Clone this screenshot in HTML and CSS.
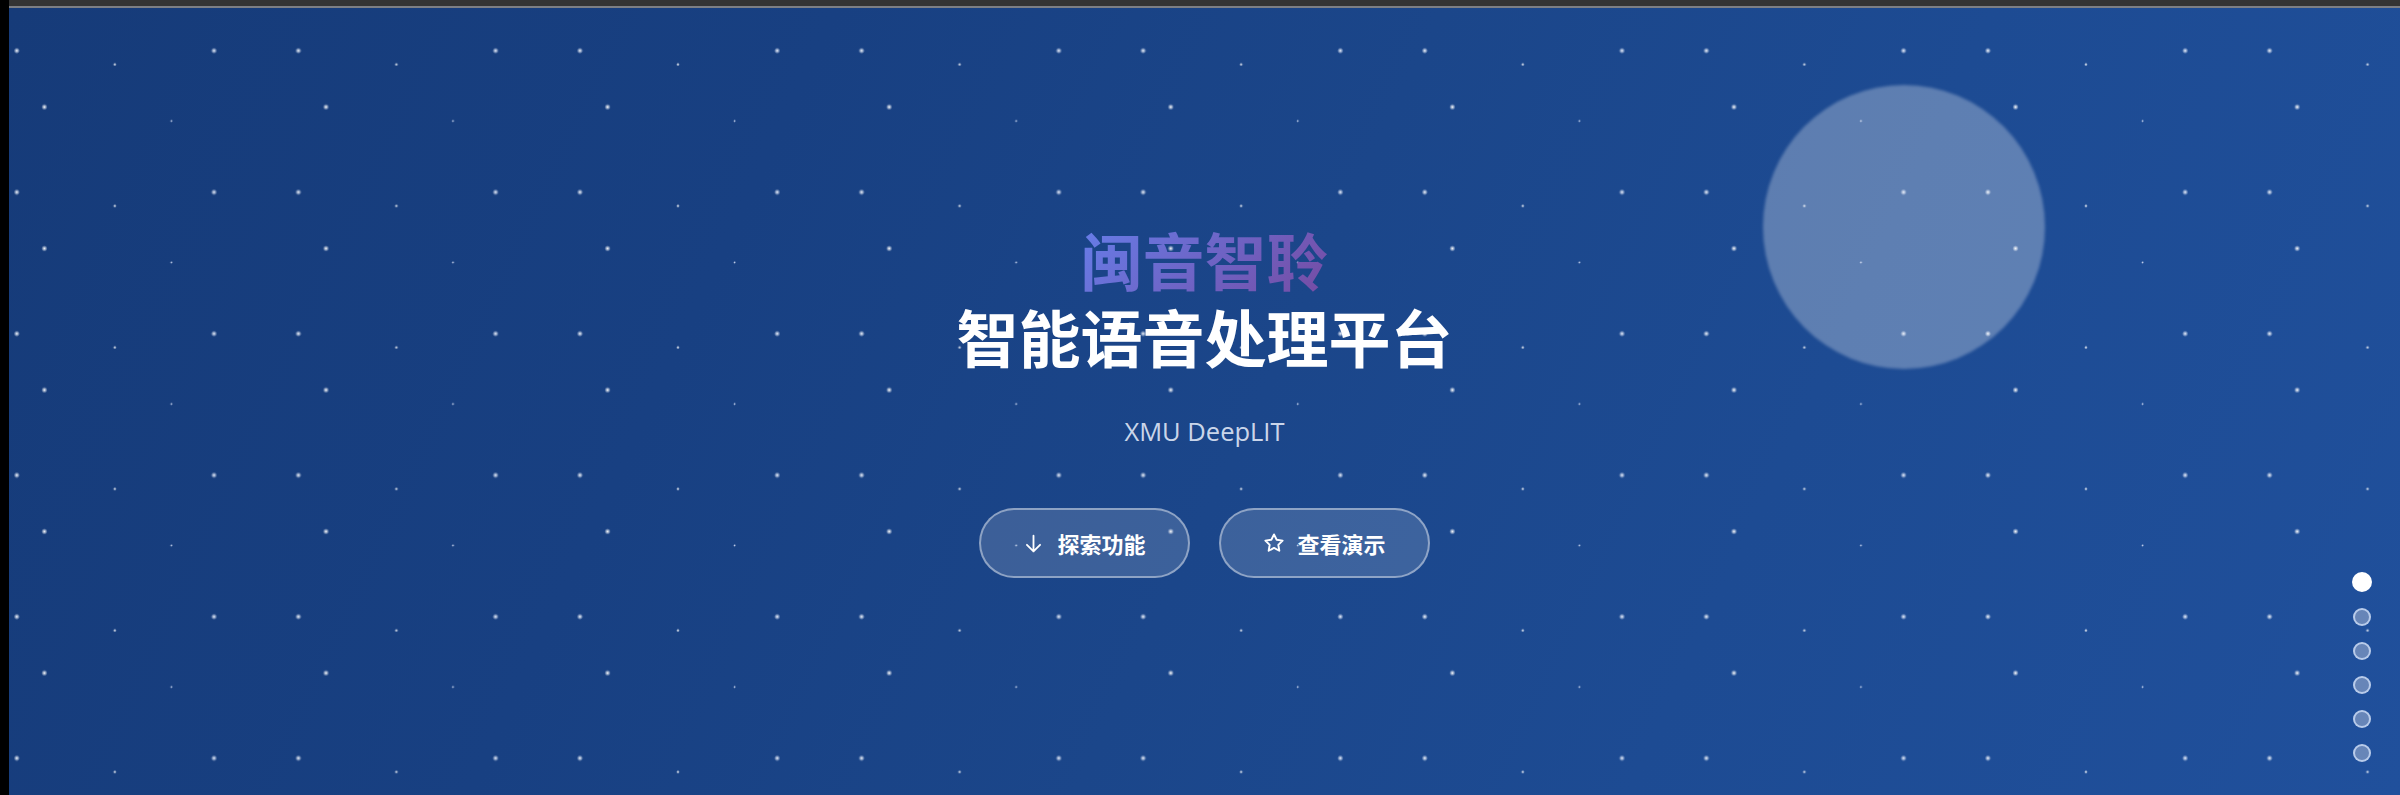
FILE: index.html
```html
<!DOCTYPE html>
<html lang="zh-CN">
<head>
<meta charset="utf-8">
<title>闽音智聆 - 智能语音处理平台</title>
<link rel="stylesheet" href="styles.css">
</head>
<body>
<div class="frame">
  <div class="topbar"></div>
  <section class="hero">
    <div class="orb"></div>
    <h1 class="title">
      <span class="title-brand">闽音智聆</span>
      <span class="title-main">智能语音处理平台</span>
    </h1>
    <p class="subtitle">XMU DeepLIT</p>
    <div class="actions">
      <button class="btn" type="button">
        <svg class="btn-icon" viewBox="0 0 24 24" width="21" height="21"><path d="M12 3v18M19.5 13.5L12 21l-7.5-7.5" fill="none" stroke="#fff" stroke-width="2.1" stroke-linecap="round" stroke-linejoin="round"/></svg>
        <span>探索功能</span>
      </button>
      <button class="btn" type="button">
        <svg class="btn-icon" viewBox="0 0 24 24" width="22" height="22"><path d="M12 2.6l2.9 5.88 6.5.94-4.7 4.58 1.11 6.47L12 17.42l-5.81 3.05 1.11-6.47-4.7-4.58 6.5-.94z" fill="none" stroke="#fff" stroke-width="2.1" stroke-linejoin="round"/></svg>
        <span>查看演示</span>
      </button>
    </div>
    <nav class="pager">
      <span class="pager-dot is-active"></span>
      <span class="pager-dot"></span>
      <span class="pager-dot"></span>
      <span class="pager-dot"></span>
      <span class="pager-dot"></span>
      <span class="pager-dot"></span>
    </nav>
  </section>
</div>
</body>
</html>
```
FILE: styles.css
```css
html, body {
  margin: 0;
  padding: 0;
}
body {
  background: #000;
  width: 2400px;
  height: 795px;
  overflow: hidden;
  display: flex;
}
.frame {
  margin-left: 9px;
  flex: 1;
  display: flex;
  flex-direction: column;
}
.topbar {
  height: 6px;
  background: #343434;
  border-bottom: 2px solid #7d7f84;
}
.hero {
  flex: 1;
  position: relative;
  overflow: hidden;
  display: flex;
  flex-direction: column;
  align-items: center;
  padding-top: 213px;
  box-sizing: border-box;
  background-image:
    radial-gradient(3.1px 3.1px at 7.8px 42.7px, #f4f8ff, rgba(200,220,255,0)),
    radial-gradient(3.1px 3.1px at 205px 42.7px, #eef3ff, rgba(200,220,255,0)),
    radial-gradient(1.8px 1.8px at 105.8px 56.5px, #ffffff, rgba(200,220,255,0)),
    radial-gradient(3.1px 3.1px at 35.4px 99px, #ffffff, rgba(200,220,255,0)),
    radial-gradient(1.4px 1.4px at 162.4px 113px, #e4ecff, rgba(200,220,255,0)),
    linear-gradient(115deg, #163b79 0%, #184082 30%, #1b468a 52%, #1d4b93 72%, #20509c 100%);
  background-size:
    281.6px 141.5px,
    281.6px 141.5px,
    281.6px 141.5px,
    281.6px 141.5px,
    281.6px 141.5px,
    100% 100%;
  background-repeat: repeat, repeat, repeat, repeat, repeat, no-repeat;
}
.orb {
  position: absolute;
  left: 1754px;
  top: 77px;
  width: 282px;
  height: 284px;
  border-radius: 50%;
  background: rgba(255, 255, 255, 0.29);
  filter: blur(1.5px);
}
.title {
  margin: 0;
  display: flex;
  flex-direction: column;
  align-items: center;
  font-family: "Noto Sans CJK SC", "Noto Sans", sans-serif;
  font-size: 62px;
  line-height: 77px;
  font-weight: 700;
  position: relative;
}
.title-brand {
  background: linear-gradient(135deg, #667eea 0%, #764ba2 100%);
  -webkit-background-clip: text;
  background-clip: text;
  color: transparent;
}
.title-main {
  color: #ffffff;
}
.subtitle {
  margin: 38px 0 0;
  font-family: "Open Sans", "Noto Sans", sans-serif;
  font-size: 25.5px;
  line-height: 36px;
  color: rgba(226, 234, 248, 0.9);
  position: relative;
}
.actions {
  margin-top: 59px;
  display: flex;
  gap: 29px;
  position: relative;
}
.btn {
  box-sizing: border-box;
  height: 70px;
  padding: 0 42px;
  display: flex;
  align-items: center;
  gap: 13px;
  border: 2px solid rgba(255, 255, 255, 0.42);
  border-radius: 35px;
  background: rgba(255, 255, 255, 0.15);
  color: #ffffff;
  font-family: "Noto Sans CJK SC", "Noto Sans", sans-serif;
  font-size: 22px;
  font-weight: 600;
  cursor: pointer;
}
.btn-icon {
  display: block;
  flex: none;
}
.pager {
  position: absolute;
  right: 28px;
  bottom: 33px;
  display: flex;
  flex-direction: column;
  align-items: center;
  gap: 16px;
}
.pager-dot {
  box-sizing: border-box;
  width: 18px;
  height: 18px;
  border-radius: 50%;
  background: rgba(190, 200, 220, 0.45);
  border: 2px solid rgba(220, 232, 255, 0.7);
}
.pager-dot.is-active {
  width: 20px;
  height: 20px;
  background: #ffffff;
  border-color: #ffffff;
}
```
